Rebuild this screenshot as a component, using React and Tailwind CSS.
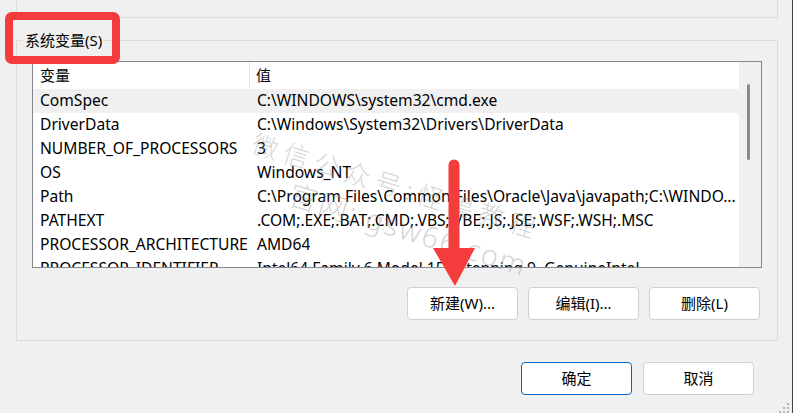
import React from "react";

const font = { fontFamily: '"Noto Sans", "Noto Sans CJK SC", sans-serif' };

const rows = [
  ["ComSpec", "C:\\WINDOWS\\system32\\cmd.exe"],
  ["DriverData", "C:\\Windows\\System32\\Drivers\\DriverData"],
  ["NUMBER_OF_PROCESSORS", "3"],
  ["OS", "Windows_NT"],
  ["Path", "C:\\Program Files\\Common Files\\Oracle\\Java\\javapath;C:\\WINDO..."],
  ["PATHEXT", ".COM;.EXE;.BAT;.CMD;.VBS;.VBE;.JS;.JSE;.WSF;.WSH;.MSC"],
  ["PROCESSOR_ARCHITECTURE", "AMD64"],
  ["PROCESSOR_IDENTIFIER", "Intel64 Family 6 Model 158 Stepping 9, GenuineIntel"],
];

function Button({ children, primary }) {
  return (
    <button
      type="button"
      className={
        primary
          ? "w-[111px] h-[33px] rounded-[4px] border border-[#0067c0] bg-white text-[15px] text-black"
          : "w-[111px] h-[33px] rounded-[4px] border border-[#d0d0d0] bg-white text-[15px] text-black"
      }
    >
      {children}
    </button>
  );
}

function VarList() {
  return (
    <div className="flex w-[730px] h-[207px] border border-[#828790] bg-white overflow-hidden">
      <div className="flex-1 flex flex-col overflow-hidden">
        <div className="flex h-[27px] shrink-0 items-center text-[15px] text-black">
          <div className="w-[217px] h-full border-r border-[#e5e5e5] pl-[7px] flex items-center">
            变量
          </div>
          <div className="pl-[6px]">值</div>
        </div>
        {rows.map(([name, value], i) => (
          <div
            key={name}
            className={
              i === 0
                ? "flex h-[24px] shrink-0 items-center bg-[#f0f0f0] text-[15.6px] text-black whitespace-nowrap"
                : "flex h-[24px] shrink-0 items-center text-[15.6px] text-black whitespace-nowrap"
            }
          >
            <div className="w-[218px] shrink-0 pl-[7px] overflow-hidden">{name}</div>
            <div className="pl-[6px] overflow-hidden">{value}</div>
          </div>
        ))}
      </div>
      <div className="w-[22px] shrink-0 bg-[#f0f0f0] relative">
        <div className="absolute left-[8px] top-[22px] w-[3px] h-[76px] rounded-full bg-[#8a8a8a]" />
      </div>
    </div>
  );
}

export default function App() {
  return (
    <div
      className="relative w-[793px] h-[413px] bg-[#f0f0f0] border-r border-[#454545] overflow-hidden flex flex-col"
      style={font}
    >
      {/* previous group box tail */}
      <div className="ml-[16px] w-[762px] h-[18px] shrink-0 border-x border-b border-[#dcdcdc]" />

      {/* system variables group */}
      <div className="relative ml-[16px] mt-[22px] w-[762px] h-[301px] shrink-0 border border-[#dcdcdc] pl-[15px] pt-[20px]">
        <span className="absolute left-[6px] top-[-12px] px-[2px] bg-[#f0f0f0] text-[15px] text-black leading-[22px]">
          系统变量(S)
        </span>
        <VarList />
        <div className="flex justify-end gap-[10px] pr-[17px] mt-[19px]">
          <Button>新建(W)...</Button>
          <Button>编辑(I)...</Button>
          <Button>删除(L)</Button>
        </div>
      </div>

      <div className="flex justify-end gap-[11px] pr-[38px] mt-[21px]">
        <Button primary>确定</Button>
        <Button>取消</Button>
      </div>

      {/* red highlight around group label */}
      <div className="absolute left-[5px] top-[12px] w-[115px] h-[52px] rounded-[7px] border-[8px] border-[#f43c3c]" />

      {/* watermark */}
      <div className="absolute left-[257px] top-[130px] rotate-[17deg] origin-top-left pointer-events-none text-[rgba(150,150,150,0.4)] font-light leading-none">
        <div className="text-[26px] tracking-[6px]">微信公众号:怪兽教程</div>
        <div className="text-[29px] mt-[10px] ml-[50px] tracking-[2px]">官网: gsw66.com</div>
      </div>

      {/* red arrow */}
      <svg className="absolute left-0 top-0 pointer-events-none" width="793" height="413">
        <line x1="454" y1="165" x2="454" y2="255" stroke="#f43c3c" strokeWidth="11" strokeLinecap="round" />
        <polygon points="433,248 475,248 455,286" fill="#f43c3c" />
      </svg>

      {/* resize grip */}
      <svg className="absolute right-[1px] bottom-0" width="12" height="12">
        <rect x="8" y="2" width="2" height="2" fill="#b4b4b4" />
        <rect x="4" y="6" width="2" height="2" fill="#b4b4b4" />
        <rect x="8" y="6" width="2" height="2" fill="#b4b4b4" />
        <rect x="0" y="10" width="2" height="2" fill="#b4b4b4" />
        <rect x="4" y="10" width="2" height="2" fill="#b4b4b4" />
        <rect x="8" y="10" width="2" height="2" fill="#b4b4b4" />
      </svg>
    </div>
  );
}
